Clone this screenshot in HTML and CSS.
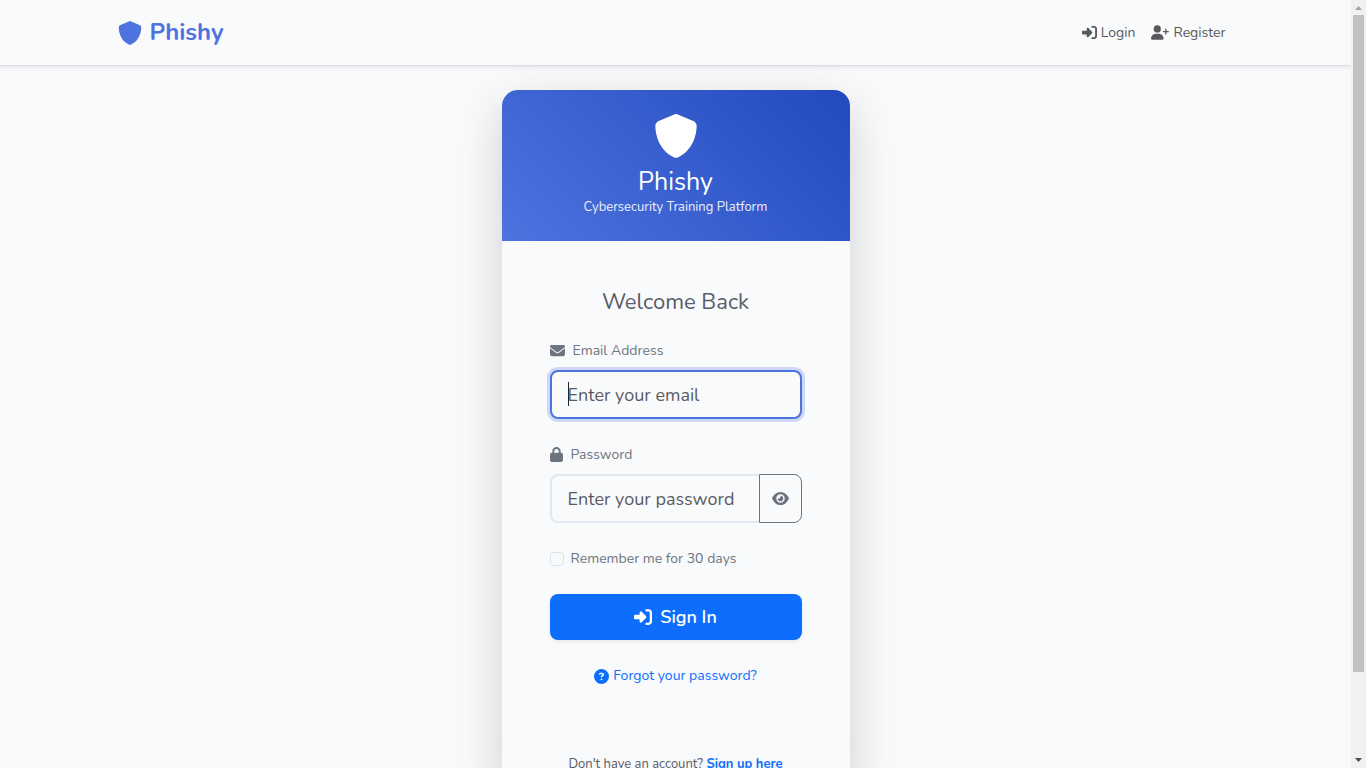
FILE: index.html
```html
<!DOCTYPE html>
<html lang="en">
<head>
<meta charset="utf-8">
<meta name="viewport" content="width=device-width, initial-scale=1">
<title>Login - Phishy</title>
<link rel="stylesheet" href="styles.css">
</head>
<body>
<svg class="sprite" aria-hidden="true">
  <symbol id="shield" viewBox="0 0 512 512"><path d="M256 0c4.6 0 9.2 1 13.4 2.9L457.7 82.8c22 9.3 38.4 31 38.3 57.2c-.5 99.2-41.3 280.7-213.6 363.2c-16.7 8-36.1 8-52.8 0C57.3 420.7 16.5 239.2 16 140c-.1-26.2 16.3-47.9 38.3-57.2L242.7 2.9C246.8 1 251.4 0 256 0z"/></symbol>
  <symbol id="sign-in" viewBox="0 0 512 512"><path d="M217.9 105.9L340.7 228.7c7.2 7.2 11.3 17.1 11.3 27.3s-4.1 20.1-11.3 27.3L217.9 406.1c-6.4 6.4-15 9.9-24 9.9c-18.7 0-33.9-15.2-33.9-33.9l0-62.1L32 320c-17.7 0-32-14.3-32-32l0-64c0-17.7 14.3-32 32-32l128 0 0-62.1c0-18.7 15.2-33.9 33.9-33.9c9 0 17.6 3.6 24 9.9zM352 416l64 0c17.7 0 32-14.3 32-32l0-256c0-17.7-14.3-32-32-32l-64 0c-17.7 0-32-14.3-32-32s14.3-32 32-32l64 0c53 0 96 43 96 96l0 256c0 53-43 96-96 96l-64 0c-17.7 0-32-14.3-32-32s14.3-32 32-32z"/></symbol>
  <symbol id="user-plus" viewBox="0 0 640 512"><path d="M96 128a128 128 0 1 1 256 0A128 128 0 1 1 96 128zM0 482.3C0 383.8 79.8 304 178.3 304l91.4 0C368.2 304 448 383.8 448 482.3c0 16.4-13.3 29.7-29.7 29.7L29.7 512C13.3 512 0 498.7 0 482.3zM504 312l0-64-64 0c-13.3 0-24-10.7-24-24s10.7-24 24-24l64 0 0-64c0-13.3 10.7-24 24-24s24 10.7 24 24l0 64 64 0c13.3 0 24 10.7 24 24s-10.7 24-24 24l-64 0 0 64c0 13.3-10.7 24-24 24s-24-10.7-24-24z"/></symbol>
  <symbol id="envelope" viewBox="0 0 512 512"><path d="M48 64C21.5 64 0 85.5 0 112c0 15.1 7.1 29.3 19.2 38.4L236.8 313.6c11.4 8.5 27 8.5 38.4 0L492.8 150.4c12.1-9.1 19.2-23.3 19.2-38.4c0-26.5-21.5-48-48-48L48 64zM0 176L0 384c0 35.3 28.7 64 64 64l384 0c35.3 0 64-28.7 64-64l0-208L294.4 339.2c-22.8 17.1-54 17.1-76.8 0L0 176z"/></symbol>
  <symbol id="lock" viewBox="0 0 448 512"><path d="M144 144l0 48 160 0 0-48c0-44.2-35.8-80-80-80s-80 35.8-80 80zM80 192l0-48C80 64.5 144.5 0 224 0s144 64.5 144 144l0 48 16 0c35.3 0 64 28.7 64 64l0 192c0 35.3-28.7 64-64 64L64 512c-35.3 0-64-28.7-64-64L0 256c0-35.3 28.7-64 64-64l16 0z"/></symbol>
  <symbol id="eye" viewBox="0 0 576 512"><path d="M288 32c-80.8 0-145.5 36.8-192.6 80.6C48.6 156 17.3 208 2.5 243.7c-3.3 7.9-3.3 16.7 0 24.6C17.3 304 48.6 356 95.4 399.4C142.5 443.2 207.2 480 288 480s145.5-36.8 192.6-80.6c46.8-43.5 78.1-95.4 93-131.1c3.3-7.9 3.3-16.7 0-24.6c-14.9-35.7-46.2-87.7-93-131.1C433.5 68.8 368.8 32 288 32zM144 256a144 144 0 1 1 288 0 144 144 0 1 1 -288 0zm144-64c0 35.3-28.7 64-64 64c-7.1 0-13.9-1.2-20.3-3.3c-5.5-1.8-11.9 1.6-11.7 7.4c.3 6.9 1.3 13.8 3.2 20.7c13.7 51.2 66.4 81.6 117.6 67.9s81.6-66.4 67.9-117.6c-11.1-41.5-47.8-69.4-88.6-71.1c-5.8-.2-9.2 6.1-7.4 11.7c2.1 6.4 3.3 13.2 3.3 20.3z"/></symbol>
  <symbol id="question" viewBox="0 0 512 512"><path d="M256 512A256 256 0 1 0 256 0a256 256 0 1 0 0 512zM169.8 165.3c7.9-22.3 29.1-37.3 52.8-37.3l58.3 0c34.9 0 63.1 28.3 63.1 63.1c0 22.6-12.1 43.5-31.7 54.8L280 264.4c-.2 13-10.9 23.6-24 23.6c-13.3 0-24-10.7-24-24l0-13.5c0-8.6 4.6-16.5 12.1-20.8l44.3-25.4c4.7-2.7 7.6-7.7 7.6-13.1c0-8.4-6.8-15.1-15.1-15.1l-58.3 0c-3.4 0-6.4 2.1-7.5 5.3l-.4 1.2c-4.4 12.5-18.2 19-30.6 14.6s-19-18.2-14.6-30.6l.4-1.2zM224 352a32 32 0 1 1 64 0 32 32 0 1 1 -64 0z"/></symbol>
</svg>
<div class="viewport">
  <div class="page">
    <header class="topbar">
      <div class="container">
        <a class="brand" href="#"><svg class="icon icon-brand" aria-hidden="true"><use href="#shield"/></svg>Phishy</a>
        <nav class="nav">
          <a href="#"><svg class="icon" aria-hidden="true"><use href="#sign-in"/></svg>Login</a>
          <a href="#"><svg class="icon icon-wide" aria-hidden="true"><use href="#user-plus"/></svg>Register</a>
        </nav>
      </div>
    </header>
    <main class="main">
      <section class="card">
        <div class="card-head">
          <svg class="icon icon-hero" aria-hidden="true"><use href="#shield"/></svg>
          <h1>Phishy</h1>
          <p>Cybersecurity Training Platform</p>
        </div>
        <form class="card-body">
          <h2>Welcome Back</h2>
          <div class="field">
            <label for="email"><svg class="icon" aria-hidden="true"><use href="#envelope"/></svg>Email Address</label>
            <div class="control">
              <input class="text-input focused" id="email" type="email" placeholder="Enter your email">
              <span class="caret"></span>
            </div>
          </div>
          <div class="field">
            <label for="password"><svg class="icon icon-lock" aria-hidden="true"><use href="#lock"/></svg>Password</label>
            <div class="control">
              <input class="text-input joined" id="password" type="password" placeholder="Enter your password">
              <button class="reveal" type="button" aria-label="Show password"><svg class="icon icon-eye" aria-hidden="true"><use href="#eye"/></svg></button>
            </div>
          </div>
          <div class="remember">
            <input id="remember" type="checkbox">
            <label for="remember">Remember me for 30 days</label>
          </div>
          <button class="submit" type="submit"><svg class="icon icon-submit" aria-hidden="true"><use href="#sign-in"/></svg>Sign In</button>
          <a class="forgot" href="#"><svg class="icon" aria-hidden="true"><use href="#question"/></svg>Forgot your password?</a>
        </form>
        <div class="card-foot">Don't have an account? <a href="#">Sign up here</a></div>
      </section>
    </main>
  </div>
  <div class="scrollbar" aria-hidden="true">
    <svg class="arrow arrow-up" viewBox="0 0 15 15"><path d="M4 10L7.500 6L11 10z"/></svg>
    <div class="track"><div class="thumb"></div></div>
    <svg class="arrow arrow-down" viewBox="0 0 15 15"><path d="M4 5L7.500 9L11 5z"/></svg>
  </div>
</div>
</body>
</html>
```
FILE: styles.css
```css
* { box-sizing: border-box; }

body {
  margin: 0;
  background: #f9fafc;
  color: #5a5c69;
  font-family: Nunito, Lato, "Open Sans", sans-serif;
  font-size: 14px;
  line-height: 23px;
}

h1, h2, p { margin: 0; font-weight: 400; }
a { color: #0d6efd; text-decoration: none; }
input, button { font: inherit; }

.sprite { display: none; }
.icon { width: 15px; height: 15px; fill: currentColor; flex: none; }
.icon-wide { width: 18px; }
.icon-brand { width: 24px; height: 24px; }
.icon-hero { width: 44px; height: 44px; }
.icon-lock { width: 13px; }
.icon-eye { width: 17px; }
.icon-submit { width: 18px; height: 18px; }

.viewport { display: flex; height: 100vh; overflow: hidden; }
.page { flex: 1; overflow: hidden; }

.topbar {
  padding: 8px 0;
  border-bottom: 1px solid #dddfe3;
  box-shadow: 0 2px 4px rgba(0, 0, 0, .075);
}
.container {
  display: flex;
  align-items: center;
  justify-content: space-between;
  max-width: 1140px;
  height: 49px;
  margin: 0 auto;
  padding: 0 12px;
}
.brand {
  display: flex;
  align-items: center;
  gap: 8px;
  color: #4e73df;
  font-size: 24px;
  font-weight: 700;
}
.nav { display: flex; gap: 16px; padding-right: 8px; }
.nav a { display: flex; align-items: center; gap: 4px; color: #58595b; }

.main { padding: 24px 12px; }
.card {
  max-width: 348px;
  margin: 0 auto;
  border-radius: 16px;
  background: #f9fafc;
  box-shadow: 0 16px 48px rgba(0, 0, 0, .175);
  overflow: hidden;
}
.card-head {
  display: flex;
  flex-direction: column;
  align-items: center;
  padding: 24px;
  background: linear-gradient(45deg, #4e73df 0%, #224abe 100%);
  color: #fff;
}
.card-head h1 { margin-top: 8px; font-size: 25px; line-height: 32px; }
.card-head p { font-size: 13px; line-height: 19px; opacity: .9; }

.card-body { display: flex; flex-direction: column; padding: 48px; }
.card-body h2 {
  margin-bottom: 24px;
  font-size: 22px;
  line-height: 26px;
  text-align: center;
}
.field { margin-bottom: 24px; }
.field label {
  display: flex;
  align-items: center;
  gap: 8px;
  margin-bottom: 8px;
  color: #6c757d;
}
.control { position: relative; display: flex; }
.text-input {
  flex: 1;
  min-width: 0;
  height: 49px;
  padding: 8px 16px;
  border: 2px solid #e3e6f0;
  border-radius: 8px;
  outline: none;
  background: #f9fafc;
  font-size: 18px;
}
.text-input::placeholder { color: #595c5f; opacity: 1; }
.focused { border-color: #4e73df; box-shadow: 0 0 0 3px rgba(78, 115, 223, .25); }
.caret {
  position: absolute;
  top: 12px;
  left: 18px;
  width: 1px;
  height: 24px;
  background: #212529;
}
.joined { border-right: 0; border-radius: 8px 0 0 8px; }
.reveal {
  display: flex;
  align-items: center;
  justify-content: center;
  width: 43px;
  padding: 0;
  border: 1px solid #6c757d;
  border-radius: 0 8px 8px 0;
  background: none;
  color: #6c757d;
}

.remember { display: flex; align-items: center; gap: 7px; margin-bottom: 24px; color: #6c757d; }
.remember input {
  width: 14px;
  height: 14px;
  margin: 0;
  border: 1px solid #dee2e6;
  border-radius: 4px;
  appearance: none;
}
.submit {
  display: flex;
  align-items: center;
  justify-content: center;
  gap: 8px;
  height: 46px;
  border: 0;
  border-radius: 8px;
  background: #0d6efd;
  box-shadow: 0 2px 4px rgba(0, 0, 0, .075);
  color: #fff;
  font-size: 18px;
  font-weight: 600;
}
.forgot {
  display: flex;
  align-items: center;
  align-self: center;
  gap: 4px;
  margin-top: 24px;
  line-height: 24px;
}
.card-foot {
  padding: 16px;
  background: #f8f9fb;
  font-size: 13px;
  line-height: 24px;
  text-align: center;
}
.card-foot a { font-weight: 700; }

.scrollbar { display: flex; flex-direction: column; width: 15px; background: #f1f1f1; }
.arrow { width: 15px; height: 15px; }
.arrow-up { fill: #a3a3a3; }
.arrow-down { fill: #505050; }
.track { flex: 1; padding: 0 2px; }
.thumb { height: 89%; background: #c1c1c1; }
```
